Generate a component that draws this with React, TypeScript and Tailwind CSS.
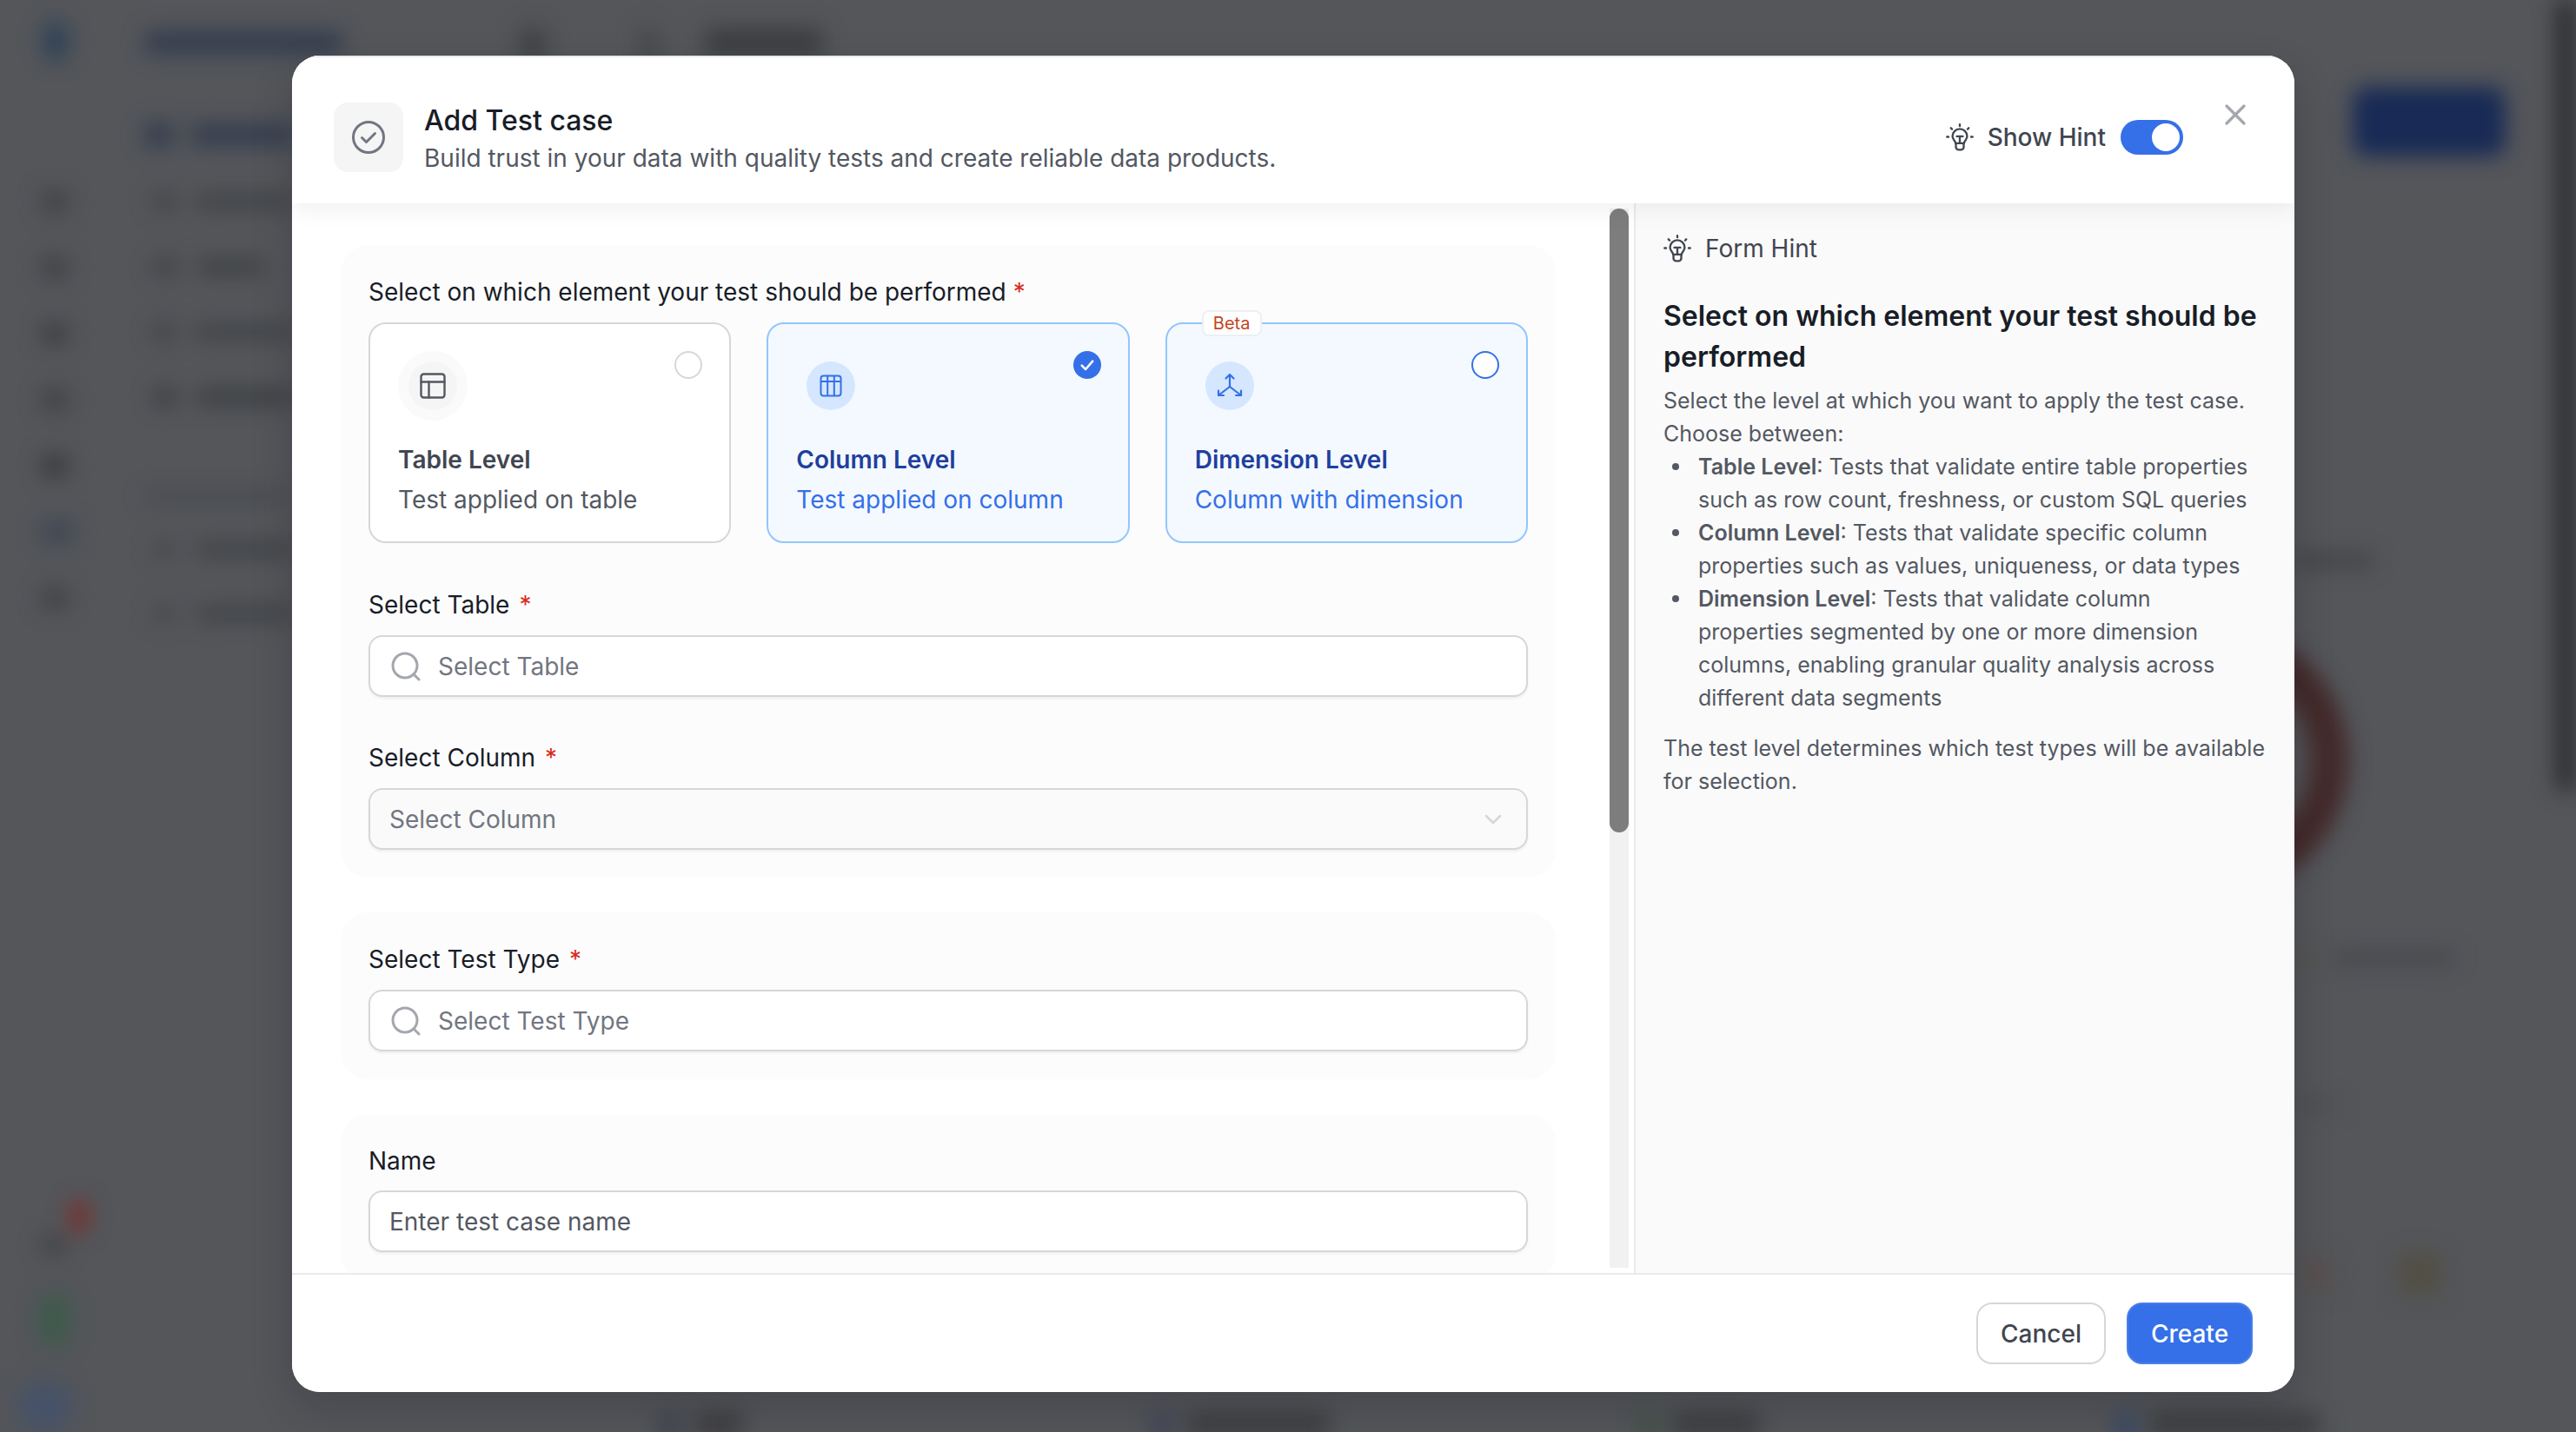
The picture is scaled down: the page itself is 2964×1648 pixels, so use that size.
import React from "react";
import { ChevronDown, PanelsTopLeft, X } from "lucide-react";

function BulbIcon({ className }: { className?: string }) {
  return (
    <svg viewBox="0 0 30 30" fill="none" stroke="currentColor" strokeWidth="2.2" strokeLinecap="round" strokeLinejoin="round" className={className}>
      <path d="M15 1.2v1.6M5.4 5l1.2 1.2M24.6 5l-1.2 1.2M1.2 14.5h1.6M27.2 14.5h1.6" />
      <path d="M10.5 21.5c0-2.6-3.4-3.8-3.4-7.6a7.9 7.9 0 0 1 15.8 0c0 3.8-3.4 5-3.4 7.6z" />
      <path d="M10.8 21.5v4a3 3 0 0 0 3 3h2.4a3 3 0 0 0 3-3v-4M11.8 14h6.4M15 14v7.5" />
    </svg>
  );
}

function SearchIcon({ className }: { className?: string }) {
  return (
    <svg viewBox="0 0 34 34" fill="none" stroke="currentColor" strokeWidth="3" strokeLinecap="round" className={className}>
      <circle cx="16" cy="16" r="14" />
      <path d="M27 27l5 5" />
    </svg>
  );
}

function ColumnsIcon({ className }: { className?: string }) {
  return (
    <svg viewBox="0 0 26 26" fill="none" stroke="currentColor" strokeWidth="2" strokeLinejoin="round" className={className}>
      <rect x="1.5" y="1.5" width="23" height="23" rx="3" />
      <path d="M1.5 8h23M9.2 1.5v23M16.8 1.5v23" />
    </svg>
  );
}

function DimensionIcon({ className }: { className?: string }) {
  return (
    <svg viewBox="0 0 32 30" fill="none" stroke="currentColor" strokeWidth="2.2" strokeLinecap="round" strokeLinejoin="round" className={className}>
      <path d="M16 16V2M11.5 6.5 16 2l4.5 4.5" />
      <path d="M16 16 3 26M3 20.5V26h6" />
      <path d="M16 16l13 10M29 20.5V26h-6" />
    </svg>
  );
}

function CheckTileIcon({ className }: { className?: string }) {
  return (
    <svg viewBox="0 0 38 38" fill="none" stroke="currentColor" strokeWidth="3" strokeLinecap="round" strokeLinejoin="round" className={className}>
      <circle cx="19" cy="19" r="17.5" />
      <path d="M11.5 19.5l5 5 10-10" />
    </svg>
  );
}

function Required() {
  return <span className="text-[#d92d20]">*</span>;
}

function Label({ text }: { text: string }) {
  return (
    <div className="flex h-[40px] items-center text-[28px] leading-[40px] text-[#181d27]">
      <span>{text}</span>
      <span className="ml-[11px]">
        <Required />
      </span>
    </div>
  );
}

function Field({ children, muted, tight }: { children: React.ReactNode; muted?: boolean; tight?: boolean }) {
  return (
    <div
      className={
        "flex h-[71px] items-center rounded-[16px] border-2 border-[#d5d7da] shadow-[0_2px_3px_rgba(10,13,18,0.06)] " +
        (tight ? "mt-[14px] " : "mt-[15px] ") +
        (muted ? "bg-[#fafafa]" : "bg-white")
      }
    >
      {children}
    </div>
  );
}

function SearchField({ text }: { text: string }) {
  return (
    <Field>
      <SearchIcon className="ml-[24px] h-[34px] w-[34px] text-[#a4a7ae]" />
      <span className="ml-[20px] text-[28px] text-[#717680]">{text}</span>
    </Field>
  );
}

type CardProps = {
  icon: React.ReactNode;
  title: string;
  sub: string;
  active?: boolean;
  mark: React.ReactNode;
  beta?: boolean;
  halo?: boolean;
};

function LevelCard({ icon, title, sub, active, mark, beta, halo }: CardProps) {
  return (
    <div
      className={
        "relative h-[254px] rounded-[20px] border-2 pl-[32px] pr-[31px] " +
        (active ? "border-[#93c5fd] bg-[#f4f9ff]" : "border-[#d5d7da] bg-white")
      }
    >
      {beta ? (
        <div className="absolute left-[40px] top-[-16px] flex h-[30px] w-[69px] items-center justify-center rounded-[8px] border-2 border-[#eeeff1] bg-white text-[20px] text-[#c4471f]">
          Beta
        </div>
      ) : null}
      <div className="flex h-[112px] items-start justify-between pt-[31px]">
        <div
          className={
            "flex h-[80px] w-[80px] items-center justify-center rounded-full " + (halo ? "bg-[#fafafa]" : "")
          }
        >
          <div
            className={
              "flex h-[56px] w-[56px] items-center justify-center rounded-full " +
              (active ? "bg-[#d5e7ff] text-[#3570e8]" : "bg-[#f5f5f5] text-[#535862]")
            }
          >
            {icon}
          </div>
        </div>
        {mark}
      </div>
      <div className="mt-[24px] text-[28px] font-semibold leading-[40px] text-[#414651]">
        <span className={active ? "text-[#1f3f9e]" : ""}>{title}</span>
      </div>
      <div className={"mt-[6px] text-[28px] leading-[40px] " + (active ? "text-[#3570e8]" : "text-[#535862]")}>{sub}</div>
    </div>
  );
}

function Blob({ className }: { className: string }) {
  return <div className={className} />;
}

function NavRow({ text, icon, bar }: { text: string; icon: string; bar: string }) {
  return (
    <div className="flex items-center pl-[10px]">
      <Blob className={"rounded " + icon} />
      <Blob className={"ml-[24px] rounded " + bar + " " + text} />
    </div>
  );
}

function Backdrop() {
  return (
    <div className="flex h-full blur-[12px]">
      <aside className="flex w-[167px] shrink-0 flex-col pl-[48px] pt-[25px]">
        <Blob className="ml-[2px] h-[45px] w-[28px] rounded-full bg-[#2d4156]" />
        <div className="mt-[150px] flex flex-col gap-[52px]">
          <Blob className="h-[24px] w-[30px] rounded-md bg-[#3f4144]" />
          <Blob className="h-[24px] w-[30px] rounded-md bg-[#3f4144]" />
          <Blob className="h-[24px] w-[30px] rounded-md bg-[#3c3e41]" />
          <Blob className="h-[24px] w-[30px] rounded-md bg-[#3f4144]" />
          <Blob className="h-[24px] w-[30px] rounded-md bg-[#37393c]" />
          <Blob className="h-[24px] w-[36px] rounded-md bg-[#3e4552]" />
          <Blob className="h-[24px] w-[30px] rounded-md bg-[#3f4144]" />
        </div>
        <Blob className="ml-[32px] mt-[680px] h-[40px] w-[22px] rounded-full bg-[#7a2f2c]" />
        <Blob className="ml-[0px] mt-[4px] h-[20px] w-[28px] rounded-md bg-[#3f4144]" />
        <Blob className="ml-[-4px] mt-[46px] h-[60px] w-[36px] rounded-full bg-[#3d5a4b]" />
        <Blob className="ml-[-28px] mt-[40px] h-[60px] w-[64px] rounded-full bg-[#465268]" />
      </aside>
      <nav className="w-[170px] shrink-0 pt-[36px]">
        <Blob className="h-[26px] w-[226px] rounded-md bg-[#333c4e]" />
        <div className="mt-[79px] flex items-center">
          <Blob className="h-[28px] w-[40px] rounded-md bg-[#333c4e]" />
          <Blob className="ml-[20px] h-[24px] w-[150px] rounded-md bg-[#333c4e]" />
        </div>
        <div className="mt-[54px] flex flex-col gap-[57px]">
          <NavRow text="w-[130px]" icon="h-[18px] w-[28px] bg-[#3f4144]" bar="h-[16px] bg-[#3f4144]" />
          <NavRow text="w-[74px]" icon="h-[18px] w-[28px] bg-[#3f4144]" bar="h-[16px] bg-[#3b3d40]" />
          <NavRow text="w-[130px]" icon="h-[18px] w-[28px] bg-[#3f4144]" bar="h-[16px] bg-[#3f4144]" />
          <NavRow text="w-[130px]" icon="h-[18px] w-[30px] bg-[#393b3e]" bar="h-[16px] bg-[#393b3e]" />
        </div>
        <Blob className="mt-[100px] h-[10px] w-[160px] rounded bg-[#43454a]" />
        <div className="mt-[48px] flex flex-col gap-[58px]">
          <NavRow text="w-[120px]" icon="h-[16px] w-[28px] bg-[#45474a]" bar="h-[16px] bg-[#3f4144]" />
          <NavRow text="w-[120px]" icon="h-[16px] w-[28px] bg-[#45474a]" bar="h-[16px] bg-[#3f4144]" />
        </div>
      </nav>
      <main className="flex-1 pt-[32px]">
        <div className="flex pl-[261px]">
          <Blob className="h-[36px] w-[30px] rounded bg-[#404245]" />
          <Blob className="ml-[109px] h-[36px] w-[20px] rounded bg-[#45474a]" />
          <Blob className="ml-[55px] h-[34px] w-[134px] rounded bg-[#3c3e41]" />
        </div>
        <div className="ml-[2370px] mt-[32px] h-[80px] w-[176px] rounded-[16px] bg-[#182a55]" />
        <div className="ml-[2303px] mt-[458px] h-[14px] w-[90px] rounded bg-[#3f4043]" />
        <div className="ml-[2056px] mt-[68px] h-[310px] w-[310px] rounded-full border-[45px] border-[#43292a]" />
        <div className="ml-[2303px] mt-[65px] flex items-center">
          <Blob className="h-[16px] w-[24px] rounded bg-[#55524a]" />
          <Blob className="ml-[20px] h-[14px] w-[140px] rounded bg-[#45464a]" />
        </div>
        <div className="ml-[2303px] mt-[155px] h-[10px] w-[50px] rounded bg-[#4a4b4e]" />
        <div className="ml-[2316px] mt-[165px] flex items-center">
          <Blob className="h-[40px] w-[30px] rounded bg-[#594f4d]" />
          <Blob className="ml-[76px] h-[50px] w-[50px] rounded bg-[#524f45]" />
        </div>
        <div className="ml-[422px] mt-[134px] flex">
          <Blob className="h-[40px] w-[24px] rounded bg-[#424453]" />
          <Blob className="ml-[16px] h-[30px] w-[55px] rounded bg-[#3e3f42]" />
          <Blob className="ml-[471px] h-[40px] w-[24px] rounded bg-[#424659]" />
          <Blob className="ml-[16px] h-[30px] w-[165px] rounded bg-[#3e3f42]" />
          <Blob className="ml-[354px] h-[40px] w-[24px] rounded bg-[#425248]" />
          <Blob className="ml-[16px] h-[30px] w-[101px] rounded bg-[#3e3f42]" />
          <Blob className="ml-[409px] h-[40px] w-[24px] rounded bg-[#394a66]" />
          <Blob className="ml-[16px] h-[30px] w-[196px] rounded bg-[#3e3f42]" />
        </div>
      </main>
      <div className="h-[910px] w-[24px] shrink-0 bg-[#2d2e31]" />
    </div>
  );
}

const bulletItem =
  "relative before:absolute before:left-[-30px] before:top-[15px] before:h-[8px] before:w-[8px] before:rounded-full before:bg-[#535862]";

function Hint() {
  return (
    <aside className="w-[760px] shrink-0 border-l-2 border-[#e9eaeb] bg-[#fafafa] pl-[32px] pr-[32px] pt-[32px]">
      <div className="flex h-[40px] items-center text-[28px] text-[#414651]">
        <BulbIcon className="h-[32px] w-[32px] text-[#414651]" />
        <span className="ml-[16px]">Form Hint</span>
      </div>
      <h2 className="mt-[34px] text-[32px] font-semibold leading-[47px] text-[#181d27]">
        Select on which element your test should be performed
      </h2>
      <div className="mt-[8px] text-[25px] leading-[38px] text-[#535862]">
        <p>Select the level at which you want to apply the test case. Choose between:</p>
        <ul className="list-none pl-[40px] pr-[16px]">
          <li className={bulletItem}>
            <b className="font-semibold">Table Level</b>: Tests that validate entire table properties such as row count, freshness, or custom SQL queries
          </li>
          <li className={bulletItem}>
            <b className="font-semibold">Column Level</b>: Tests that validate specific column properties such as values, uniqueness, or data types
          </li>
          <li className={bulletItem}>
            <b className="font-semibold">Dimension Level</b>: Tests that validate column properties segmented by one or more dimension columns, enabling granular quality analysis across different data segments
          </li>
        </ul>
        <p className="mt-[20px]">The test level determines which test types will be available for selection.</p>
      </div>
    </aside>
  );
}

export default function App() {
  return (
    <div className="relative h-[1648px] w-[2964px] overflow-hidden bg-[#54565a] font-['Inter',sans-serif]">
      <Backdrop />
      <div className="absolute inset-0 pl-[336px] pt-[64px]">
        <div className="flex h-[1538px] w-[2304px] flex-col overflow-hidden rounded-[32px] bg-white shadow-[0_20px_48px_rgba(10,13,18,0.18)]">
          <header className="relative z-10 flex h-[170px] shrink-0 items-start border-t-2 border-[#e9eaeb] bg-white pl-[48px] pr-[48px] pt-[50px] shadow-[0_8px_24px_rgba(10,13,18,0.06)]">
            <div className="flex h-[88px] flex-1 items-center">
              <div className="mb-[4px] flex h-[80px] w-[80px] items-center justify-center rounded-[16px] bg-[#f5f5f5]">
                <CheckTileIcon className="h-[38px] w-[38px] text-[#717680]" />
              </div>
              <div className="ml-[24px]">
                <div className="pt-[1px] text-[32px] font-medium leading-[44px] text-[#181d27]">Add Test case</div>
                <div className="mt-[-1px] text-[28px] leading-[44px] text-[#535862]">
                  Build trust in your data with quality tests and create reliable data products.
                </div>
              </div>
            </div>
            <div className="mb-[4px] flex h-[84px] items-center">
              <BulbIcon className="h-[32px] w-[32px] text-[#414651]" />
              <span className="ml-[16px] text-[28px] font-medium text-[#414651]">Show Hint</span>
              <div className="ml-[17px] flex h-[40px] w-[72px] items-center justify-end rounded-full bg-[#3570e8] pr-[4px]">
                <div className="h-[32px] w-[32px] rounded-full bg-white" />
              </div>
            </div>
            <button className="ml-[40px] mt-[-4px] flex h-[40px] w-[40px] items-center justify-center text-[#a4a7ae]">
              <X className="h-[40px] w-[40px]" strokeWidth={2} />
            </button>
          </header>
          <div className="flex min-h-0 flex-1">
            <div className="flex min-w-0 flex-1 overflow-hidden pl-[56px]">
              <div className="w-[1398px] shrink-0 pt-[48px]">
                <section className="rounded-[32px] bg-[#fcfcfd] pb-[32px] pl-[32px] pr-[32px] pt-[34px]">
                  <div className="flex h-[40px] items-center text-[28px] leading-[40px] text-[#181d27]">
                    <span>Select on which element your test should be performed</span>
                    <span className="ml-[8px]">
                      <Required />
                    </span>
                  </div>
                  <div className="mt-[15px] grid grid-cols-3 gap-[41px]">
                    <LevelCard
                      halo
                      title="Table Level"
                      sub="Test applied on table"
                      icon={<PanelsTopLeft className="h-[36px] w-[36px]" strokeWidth={1.6} />}
                      mark={<div className="h-[32px] w-[32px] rounded-full border-2 border-[#d5d7da] bg-white" />}
                    />
                    <LevelCard
                      active
                      title="Column Level"
                      sub="Test applied on column"
                      icon={<ColumnsIcon className="h-[26px] w-[26px]" />}
                      mark={
                        <div className="flex h-[32px] w-[32px] items-center justify-center rounded-full bg-[#3570e8]">
                          <svg viewBox="0 0 16 16" fill="none" stroke="white" strokeWidth="2" strokeLinecap="round" strokeLinejoin="round" className="h-[20px] w-[20px]">
                            <path d="M3 8.5 6.5 12 13 4.5" />
                          </svg>
                        </div>
                      }
                    />
                    <LevelCard
                      active
                      beta
                      title="Dimension Level"
                      sub="Column with dimension"
                      icon={<DimensionIcon className="h-[32px] w-[32px]" />}
                      mark={<div className="h-[32px] w-[32px] rounded-full border-2 border-[#3570e8] bg-white" />}
                    />
                  </div>
                  <div className="mt-[51px]">
                    <Label text="Select Table" />
                    <SearchField text="Select Table" />
                  </div>
                  <div className="mt-[50px]">
                    <Label text="Select Column" />
                    <Field muted>
                      <span className="ml-[22px] flex-1 text-[28px] text-[#717680]">Select Column</span>
                      <ChevronDown className="mr-[22px] h-[32px] w-[32px] text-[#d5d7da]" strokeWidth={2} />
                    </Field>
                  </div>
                </section>
                <section className="mt-[40px] rounded-[32px] bg-[#fcfcfd] pb-[32px] pl-[32px] pr-[32px] pt-[34px]">
                  <Label text="Select Test Type" />
                  <SearchField text="Select Test Type" />
                </section>
                <section className="mt-[40px] rounded-[32px] bg-[#fcfcfd] pb-[33px] pl-[32px] pr-[32px] pt-[34px]">
                  <div className="flex h-[40px] items-center text-[28px] text-[#181d27]">Name</div>
                  <Field tight>
                    <span className="ml-[22px] text-[28px] text-[#535862]">Enter test case name</span>
                  </Field>
                </section>
              </div>
              <div className="ml-[62px] mt-[6px] h-[1219px] w-[22px] shrink-0 bg-[#f1f1f1]">
                <div className="h-[718px] w-full rounded-b-[11px] rounded-t-[11px] bg-[#7d7d7d]" />
              </div>
              <div className="w-[6px] shrink-0" />
            </div>
            <Hint />
          </div>
          <footer className="flex h-[137px] shrink-0 items-center justify-end gap-[24px] border-t-2 border-[#e9eaeb] bg-white pr-[48px]">
            <button className="flex h-[71px] w-[149px] items-center justify-center rounded-[18px] border-2 border-[#d5d7da] bg-white text-[28px] font-medium text-[#414651]">
              Cancel
            </button>
            <button className="flex h-[71px] w-[145px] items-center justify-center rounded-[18px] bg-[#3570e8] text-[28px] font-medium text-white shadow-[inset_0_0_0_2px_rgba(255,255,255,0.1)]">
              Create
            </button>
          </footer>
        </div>
      </div>
    </div>
  );
}
